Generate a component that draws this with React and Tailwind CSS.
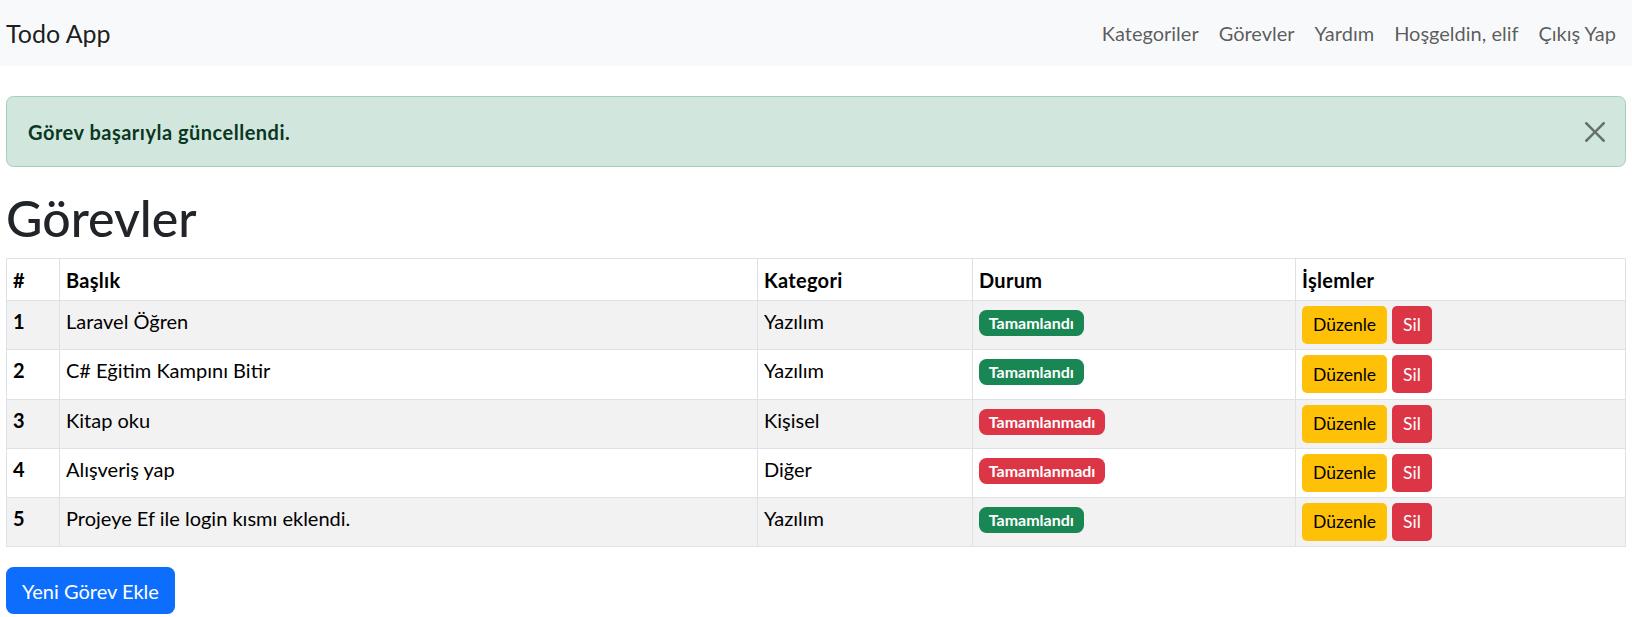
import React from 'react';

const tasks = [
  { id: 1, title: 'Laravel Öğren', category: 'Yazılım', done: true },
  { id: 2, title: 'C# Eğitim Kampını Bitir', category: 'Yazılım', done: true },
  { id: 3, title: 'Kitap oku', category: 'Kişisel', done: false },
  { id: 4, title: 'Alışveriş yap', category: 'Diğer', done: false },
  { id: 5, title: 'Projeye Ef ile login kısmı eklendi.', category: 'Yazılım', done: true },
];

const navLinks = ['Kategoriler', 'Görevler', 'Yardım', 'Hoşgeldin, elif', 'Çıkış Yap'];

function CloseIcon() {
  return (
    <svg viewBox="0 0 16 16" className="w-[20px] h-[20px] opacity-50" fill="#000">
      <path d="M.293.293a1 1 0 0 1 1.414 0L8 6.586 14.293.293a1 1 0 1 1 1.414 1.414L9.414 8l6.293 6.293a1 1 0 0 1-1.414 1.414L8 9.414l-6.293 6.293a1 1 0 0 1-1.414-1.414L6.586 8 .293 1.707a1 1 0 0 1 0-1.414z" />
    </svg>
  );
}

function StatusBadge({ done }) {
  return done ? (
    <span className="inline-block rounded-[7.5px] bg-[#198754] px-[9.75px] py-[5px] text-[16px] font-bold leading-none text-white">
      Tamamlandı
    </span>
  ) : (
    <span className="inline-block rounded-[7.5px] bg-[#dc3545] px-[9.75px] py-[5px] text-[16px] font-bold leading-none text-white">
      Tamamlanmadı
    </span>
  );
}

export default function App() {
  return (
    <div className="min-h-screen bg-white text-[20px] leading-[30px] text-[#212529] font-['Lato',sans-serif]">
      {/* Navbar */}
      <nav className="flex h-[66px] items-center justify-between bg-[#f8f9fa] px-[6px]">
        <span className="text-[25px] text-black/90">Todo App</span>
        <div className="flex">
          {navLinks.map((l) => (
            <a key={l} className="px-[10px] text-[20px] text-black/65">
              {l}
            </a>
          ))}
        </div>
      </nav>

      <main className="px-[6px]">
        {/* Alert */}
        <div className="mt-[30px] flex h-[71px] items-center justify-between rounded-[7.5px] border border-[#a3cfbb] bg-[#d1e7dd] pl-[21px] pr-[20px] text-[#0a3622]">
          <strong className="font-bold tracking-[0.5px]">Görev başarıyla güncellendi.</strong>
          <CloseIcon />
        </div>

        <h1 className="mt-[21px] mb-[10px] text-[50px] font-medium leading-[60px]">Görevler</h1>

        {/* Table */}
        <table className="w-full table-fixed border-collapse text-black">
          <thead>
            <tr className="h-[42px]">
              <th className="w-[53px] border border-[#dee2e6] px-[6px] text-left font-bold">#</th>
              <th className="w-[698px] border border-[#dee2e6] px-[6px] text-left font-bold tracking-[0.3px]">Başlık</th>
              <th className="w-[215px] border border-[#dee2e6] px-[6px] text-left font-bold tracking-[0.3px]">Kategori</th>
              <th className="w-[323px] border border-[#dee2e6] px-[6px] text-left font-bold tracking-[0.3px]">Durum</th>
              <th className="border border-[#dee2e6] px-[6px] text-left font-bold tracking-[0.3px]">İşlemler</th>
            </tr>
          </thead>
          <tbody>
            {tasks.map((t, i) => (
              <tr key={t.id} className={i % 2 === 0 ? 'h-[49.3px] bg-[#f2f2f2]' : 'h-[49.3px] bg-white'}>
                <th className="border border-[#dee2e6] px-[6px] pt-[5px] text-left align-top font-bold">{t.id}</th>
                <td className="border border-[#dee2e6] px-[6px] pt-[5px] align-top">{t.title}</td>
                <td className="border border-[#dee2e6] px-[6px] pt-[5px] align-top">{t.category}</td>
                <td className="border border-[#dee2e6] px-[6px] pt-[5px] align-top">
                  <StatusBadge done={t.done} />
                </td>
                <td className="border border-[#dee2e6] px-[6px] pt-[5px] align-top">
                  <div className="flex gap-[5px]">
                    <button className="h-[38px] rounded-[5px] bg-[#ffc107] px-[11px] text-[17.5px] leading-none text-black">
                      Düzenle
                    </button>
                    <button className="h-[38px] rounded-[5px] bg-[#dc3545] px-[11px] text-[17.5px] leading-none text-white">
                      Sil
                    </button>
                  </div>
                </td>
              </tr>
            ))}
          </tbody>
        </table>

        <button className="mt-[20px] h-[47px] rounded-[7.5px] bg-[#0d6efd] px-[16px] text-[20px] text-white">
          Yeni Görev Ekle
        </button>
      </main>
    </div>
  );
}
